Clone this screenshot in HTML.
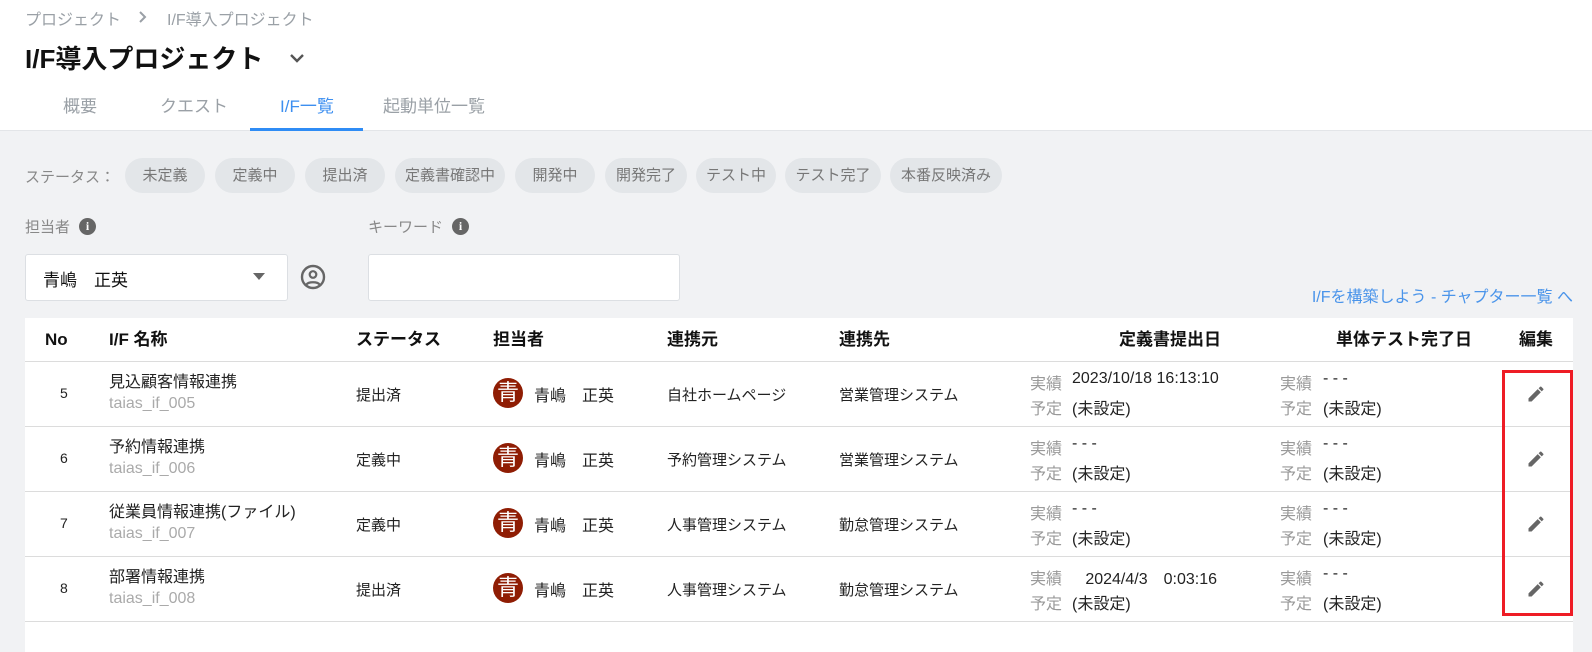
<!DOCTYPE html>
<html><head><meta charset="utf-8"><style>
*{margin:0;padding:0;box-sizing:border-box}
body{width:1592px;height:652px;overflow:hidden;background:#f1f2f4;font-family:"Liberation Sans","Noto Sans CJK JP",sans-serif;color:#222;position:relative}
.a{position:absolute;white-space:nowrap}
.hdr{position:absolute;left:0;top:0;width:1592px;height:131px;background:#fff;border-bottom:1px solid #e3e5e8}
.chip{position:absolute;top:158px;height:35px;border-radius:18px;background:#e3e6e9;color:#777;font-size:15px;line-height:35px;text-align:center}
.tbl{position:absolute;left:25px;top:318px;width:1548px;height:334px;background:#fff}
.th{position:absolute;top:0;height:44px;line-height:44px;font-size:17px;font-weight:bold;color:#111}
.line{position:absolute;left:0;width:1548px;height:1px;background:#dcdcdc}
.c{position:absolute;font-size:15px;white-space:nowrap;color:#222}
.g{color:#999}
.av{position:absolute;width:30px;height:30px;border-radius:50%;background:#8f1d04;color:#fff;font-size:22px;line-height:30px;text-align:center}
</style></head><body>
<div class="hdr"></div>
<div class="a" style="left:25px;top:6px;font-size:16px;color:#9aa0a6">プロジェクト</div>
<svg class="a" style="left:138px;top:11px" width="10" height="12" viewBox="0 0 10 12"><path d="M2 1l5 5-5 5" fill="none" stroke="#9aa0a6" stroke-width="2"/></svg>
<div class="a" style="left:167px;top:6px;font-size:16px;color:#9aa0a6">I/F導入プロジェクト</div>
<div class="a" style="left:25px;top:39px;font-size:26px;font-weight:bold;color:#111">I/F導入プロジェクト</div>
<svg class="a" style="left:289px;top:53px" width="16" height="12" viewBox="0 0 16 12"><path d="M2 2l6 6 6-6" fill="none" stroke="#555" stroke-width="2.4"/></svg>
<div class="a" style="left:63px;top:92px;font-size:17px;color:#9aa0a6">概要</div>
<div class="a" style="left:160px;top:92px;font-size:17px;color:#9aa0a6">クエスト</div>
<div class="a" style="left:280px;top:92px;font-size:17px;color:#3d8ff0">I/F一覧</div>
<div class="a" style="left:383px;top:92px;font-size:17px;color:#9aa0a6">起動単位一覧</div>
<div class="a" style="left:250px;top:128px;width:113px;height:3px;background:#2f8cf5"></div>

<div class="a" style="left:25px;top:166px;font-size:15px;color:#888">ステータス：</div>
<div class="chip" style="left:125px;width:80px">未定義</div>
<div class="chip" style="left:215px;width:80px">定義中</div>
<div class="chip" style="left:305px;width:80px">提出済</div>
<div class="chip" style="left:395px;width:110px">定義書確認中</div>
<div class="chip" style="left:515px;width:80px">開発中</div>
<div class="chip" style="left:605px;width:82px">開発完了</div>
<div class="chip" style="left:696px;width:80px">テスト中</div>
<div class="chip" style="left:785px;width:96px">テスト完了</div>
<div class="chip" style="left:890px;width:112px">本番反映済み</div>

<div class="a" style="left:25px;top:216px;font-size:15px;color:#888">担当者</div>
<div class="a" style="left:79px;top:218px;width:17px;height:17px;border-radius:50%;background:#666;color:#fff;font-size:12px;font-weight:bold;line-height:17px;text-align:center;font-family:'Liberation Serif',serif">i</div>
<div class="a" style="left:368px;top:216px;font-size:15px;color:#888">キーワード</div>
<div class="a" style="left:452px;top:218px;width:17px;height:17px;border-radius:50%;background:#666;color:#fff;font-size:12px;font-weight:bold;line-height:17px;text-align:center;font-family:'Liberation Serif',serif">i</div>
<div class="a" style="left:25px;top:254px;width:263px;height:47px;background:#fff;border:1px solid #dcdfe3;border-radius:3px"></div>
<div class="a" style="left:43px;top:266px;font-size:17px;color:#111">青嶋　正英</div>
<svg class="a" style="left:253px;top:273px" width="12" height="8"><path d="M0 0h12L6 7z" fill="#666"/></svg>
<svg class="a" style="left:298px;top:262px" width="30" height="30" viewBox="0 0 30 30"><circle cx="15" cy="15" r="11" fill="none" stroke="#666" stroke-width="2.4"/><circle cx="15" cy="12.5" r="3.3" fill="none" stroke="#666" stroke-width="2.2"/><path d="M8.5 22.5c2-3 11-3 13 0" fill="none" stroke="#666" stroke-width="2.2"/></svg>
<div class="a" style="left:368px;top:254px;width:312px;height:47px;background:#fff;border:1px solid #dcdfe3;border-radius:3px"></div>
<div class="a" style="right:19px;top:283px;font-size:16px;color:#4a94ea">I/Fを構築しよう - チャプター一覧 へ</div>

<div class="tbl">
<div class="th" style="left:20px">No</div>
<div class="th" style="left:84px">I/F 名称</div>
<div class="th" style="left:331px">ステータス</div>
<div class="th" style="left:468px">担当者</div>
<div class="th" style="left:642px">連携元</div>
<div class="th" style="left:814px">連携先</div>
<div class="th" style="right:352px">定義書提出日</div>
<div class="th" style="right:101px">単体テスト完了日</div>
<div class="th" style="left:1494px">編集</div>
<div class="line" style="top:43px"></div>
<div class="line" style="top:108px"></div>
<div class="line" style="top:173px"></div>
<div class="line" style="top:238px"></div>
<div class="line" style="top:303px"></div>
</div>

<div id="rows"></div>
<div class="a" style="left:1502px;top:370px;width:71px;height:246px;border:3px solid #ee1c25"></div>

<script>
var rows=[["5","見込顧客情報連携","taias_if_005","提出済","自社ホームページ","営業管理システム","2023/10/18 16:13:10"],
["6","予約情報連携","taias_if_006","定義中","予約管理システム","営業管理システム","- - -"],
["7","従業員情報連携(ファイル)","taias_if_007","定義中","人事管理システム","勤怠管理システム","- - -"],
["8","部署情報連携","taias_if_008","提出済","人事管理システム","勤怠管理システム","&nbsp;&nbsp;&nbsp;2024/4/3　0:03:16"]];
var h="";
rows.forEach(function(r,i){var y=362+65*i;var m=y+32;
h+='<div class="c" style="left:60px;top:'+(m-9)+'px;font-size:14px">'+r[0]+'</div>';
h+='<div class="c" style="left:109px;top:'+(m-26)+'px;font-size:16px">'+r[1]+'</div>';
h+='<div class="c g" style="left:109px;top:'+(m+1)+'px;font-size:16px;color:#aaa">'+r[2]+'</div>';
h+='<div class="c" style="left:356px;top:'+(m-10)+'px">'+r[3]+'</div>';
h+='<div class="av" style="left:493px;top:'+(m-16)+'px">青</div>';
h+='<div class="c" style="left:534px;top:'+(m-12)+'px;font-size:16px">青嶋　正英</div>';
h+='<div class="c" style="left:667px;top:'+(m-10)+'px">'+r[4]+'</div>';
h+='<div class="c" style="left:839px;top:'+(m-10)+'px">'+r[5]+'</div>';
h+='<div class="c g" style="left:1030px;top:'+(m-24)+'px;font-size:16px">実績</div><div class="c" style="left:1072px;top:'+(m-24)+'px;font-size:16px">'+r[6]+'</div>';
h+='<div class="c g" style="left:1030px;top:'+(m+1)+'px;font-size:16px">予定</div><div class="c" style="left:1072px;top:'+(m+1)+'px;font-size:16px">(未設定)</div>';
h+='<div class="c g" style="left:1280px;top:'+(m-24)+'px;font-size:16px">実績</div><div class="c" style="left:1323px;top:'+(m-24)+'px;font-size:16px">- - -</div>';
h+='<div class="c g" style="left:1280px;top:'+(m+1)+'px;font-size:16px">予定</div><div class="c" style="left:1323px;top:'+(m+1)+'px;font-size:16px">(未設定)</div>';
h+='<svg class="a" style="left:1526px;top:'+(m-10)+'px" width="20" height="20" viewBox="0 0 24 24"><path d="M3 17.25V21h3.75L17.81 9.94l-3.75-3.75L3 17.25zM20.71 7.04a1 1 0 000-1.41l-2.34-2.34a1 1 0 00-1.41 0l-1.83 1.83 3.75 3.75 1.83-1.83z" fill="#666"/></svg>';
});
document.getElementById("rows").innerHTML=h;
</script>
</body></html>
